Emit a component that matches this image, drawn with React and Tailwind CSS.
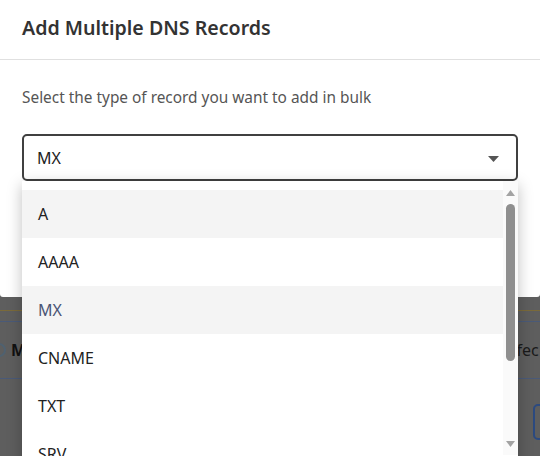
export default function App() {
    const items = ["A", "AAAA", "MX", "CNAME", "TXT", "SRV"];

    return (
        <div className="relative w-[540px] h-[456px] overflow-hidden bg-[#5e5e5e] font-['Noto_Sans',sans-serif]">

            {/* modal */}
            <div className="h-[297px] bg-white rounded-b-[3px]">
                <div className="h-[60px] px-[22px] flex items-center border-b border-[#e0e0e0]">
                    <h1 className="text-[19.6px] font-semibold text-[#333] -mt-[3px]">
                        Add Multiple DNS Records
                    </h1>
                </div>

                <div className="px-[22px] pt-[28px]">
                    <p className="text-[15.4px] leading-[20px] text-[#555]">
                        Select the type of record you want to add in bulk
                    </p>

                    <div className="mt-[26px] h-[47px] border-2 border-[#404040] rounded-[5px] flex items-center justify-between pl-[13px] pr-[17px]">
                        <span className="text-[16px] text-[#222]">MX</span>
                        <svg width="11" height="6" viewBox="0 0 11 6" className="mt-[2px]">
                            <path d="M0 0h11L5.5 6z" fill="#555" />
                        </svg>
                    </div>
                </div>
            </div>

            {/* page behind the overlay */}
            <div className="pt-[13px]">
                <div className="h-px bg-[#7a6a3a]" />
                <div className="h-px bg-[#4a5a78] mt-[10px]" />
                <div className="h-[56px] flex items-center justify-between">
                    <div className="flex items-center gap-[5px] -ml-[8px]">
                        <div className="w-[14px] h-[14px] rounded-full border-2 border-[#4f6170]" />
                        <span className="text-[16px] font-bold text-[#111]">M</span>
                    </div>
                    <span className="text-[16px] text-[#1a1a1a] w-[29px] overflow-hidden whitespace-nowrap">ffec</span>
                </div>
                <div className="h-px bg-[#4a5a78]" />
                <div className="flex justify-end mt-[25px]">
                    <div className="w-[20px] h-[36px] border-2 border-[#2c4a80] rounded-[5px] -mr-[13px]" />
                </div>
            </div>

            {/* open dropdown menu */}
            <div className="absolute left-[22px] top-[181px] w-[496px] h-[300px] bg-white flex shadow-[0_4px_14px_rgba(0,0,0,0.25)]">
                <div className="flex-1 pt-[9px]">
                    {items.map((it) => (
                        <div
                            key={it}
                            className={
                                it === "A"
                                    ? "h-[48px] px-[16px] flex items-center text-[16px] text-[#222] bg-[#f4f4f4]"
                                    : it === "MX"
                                    ? "h-[48px] px-[16px] flex items-center text-[16px] text-[#4a5575] bg-[#f4f4f4]"
                                    : "h-[48px] px-[16px] flex items-center text-[16px] text-[#222]"
                            }
                        >
                            {it}
                        </div>
                    ))}
                </div>

                <div className="w-[15px] h-[274px] bg-[#fafafa] flex flex-col items-center">
                    <svg width="9" height="6" viewBox="0 0 9 6" className="mt-[9px]">
                        <path d="M4.5 0L9 6H0z" fill="#a3a3a3" />
                    </svg>
                    <div className="w-[9px] h-[157px] mt-[8px] rounded-full bg-[#8f8f8f]" />
                    <div className="flex-1" />
                    <svg width="9" height="6" viewBox="0 0 9 6" className="mb-[8px]">
                        <path d="M0 0h9L4.5 6z" fill="#a3a3a3" />
                    </svg>
                </div>
            </div>

        </div>
    );
}
